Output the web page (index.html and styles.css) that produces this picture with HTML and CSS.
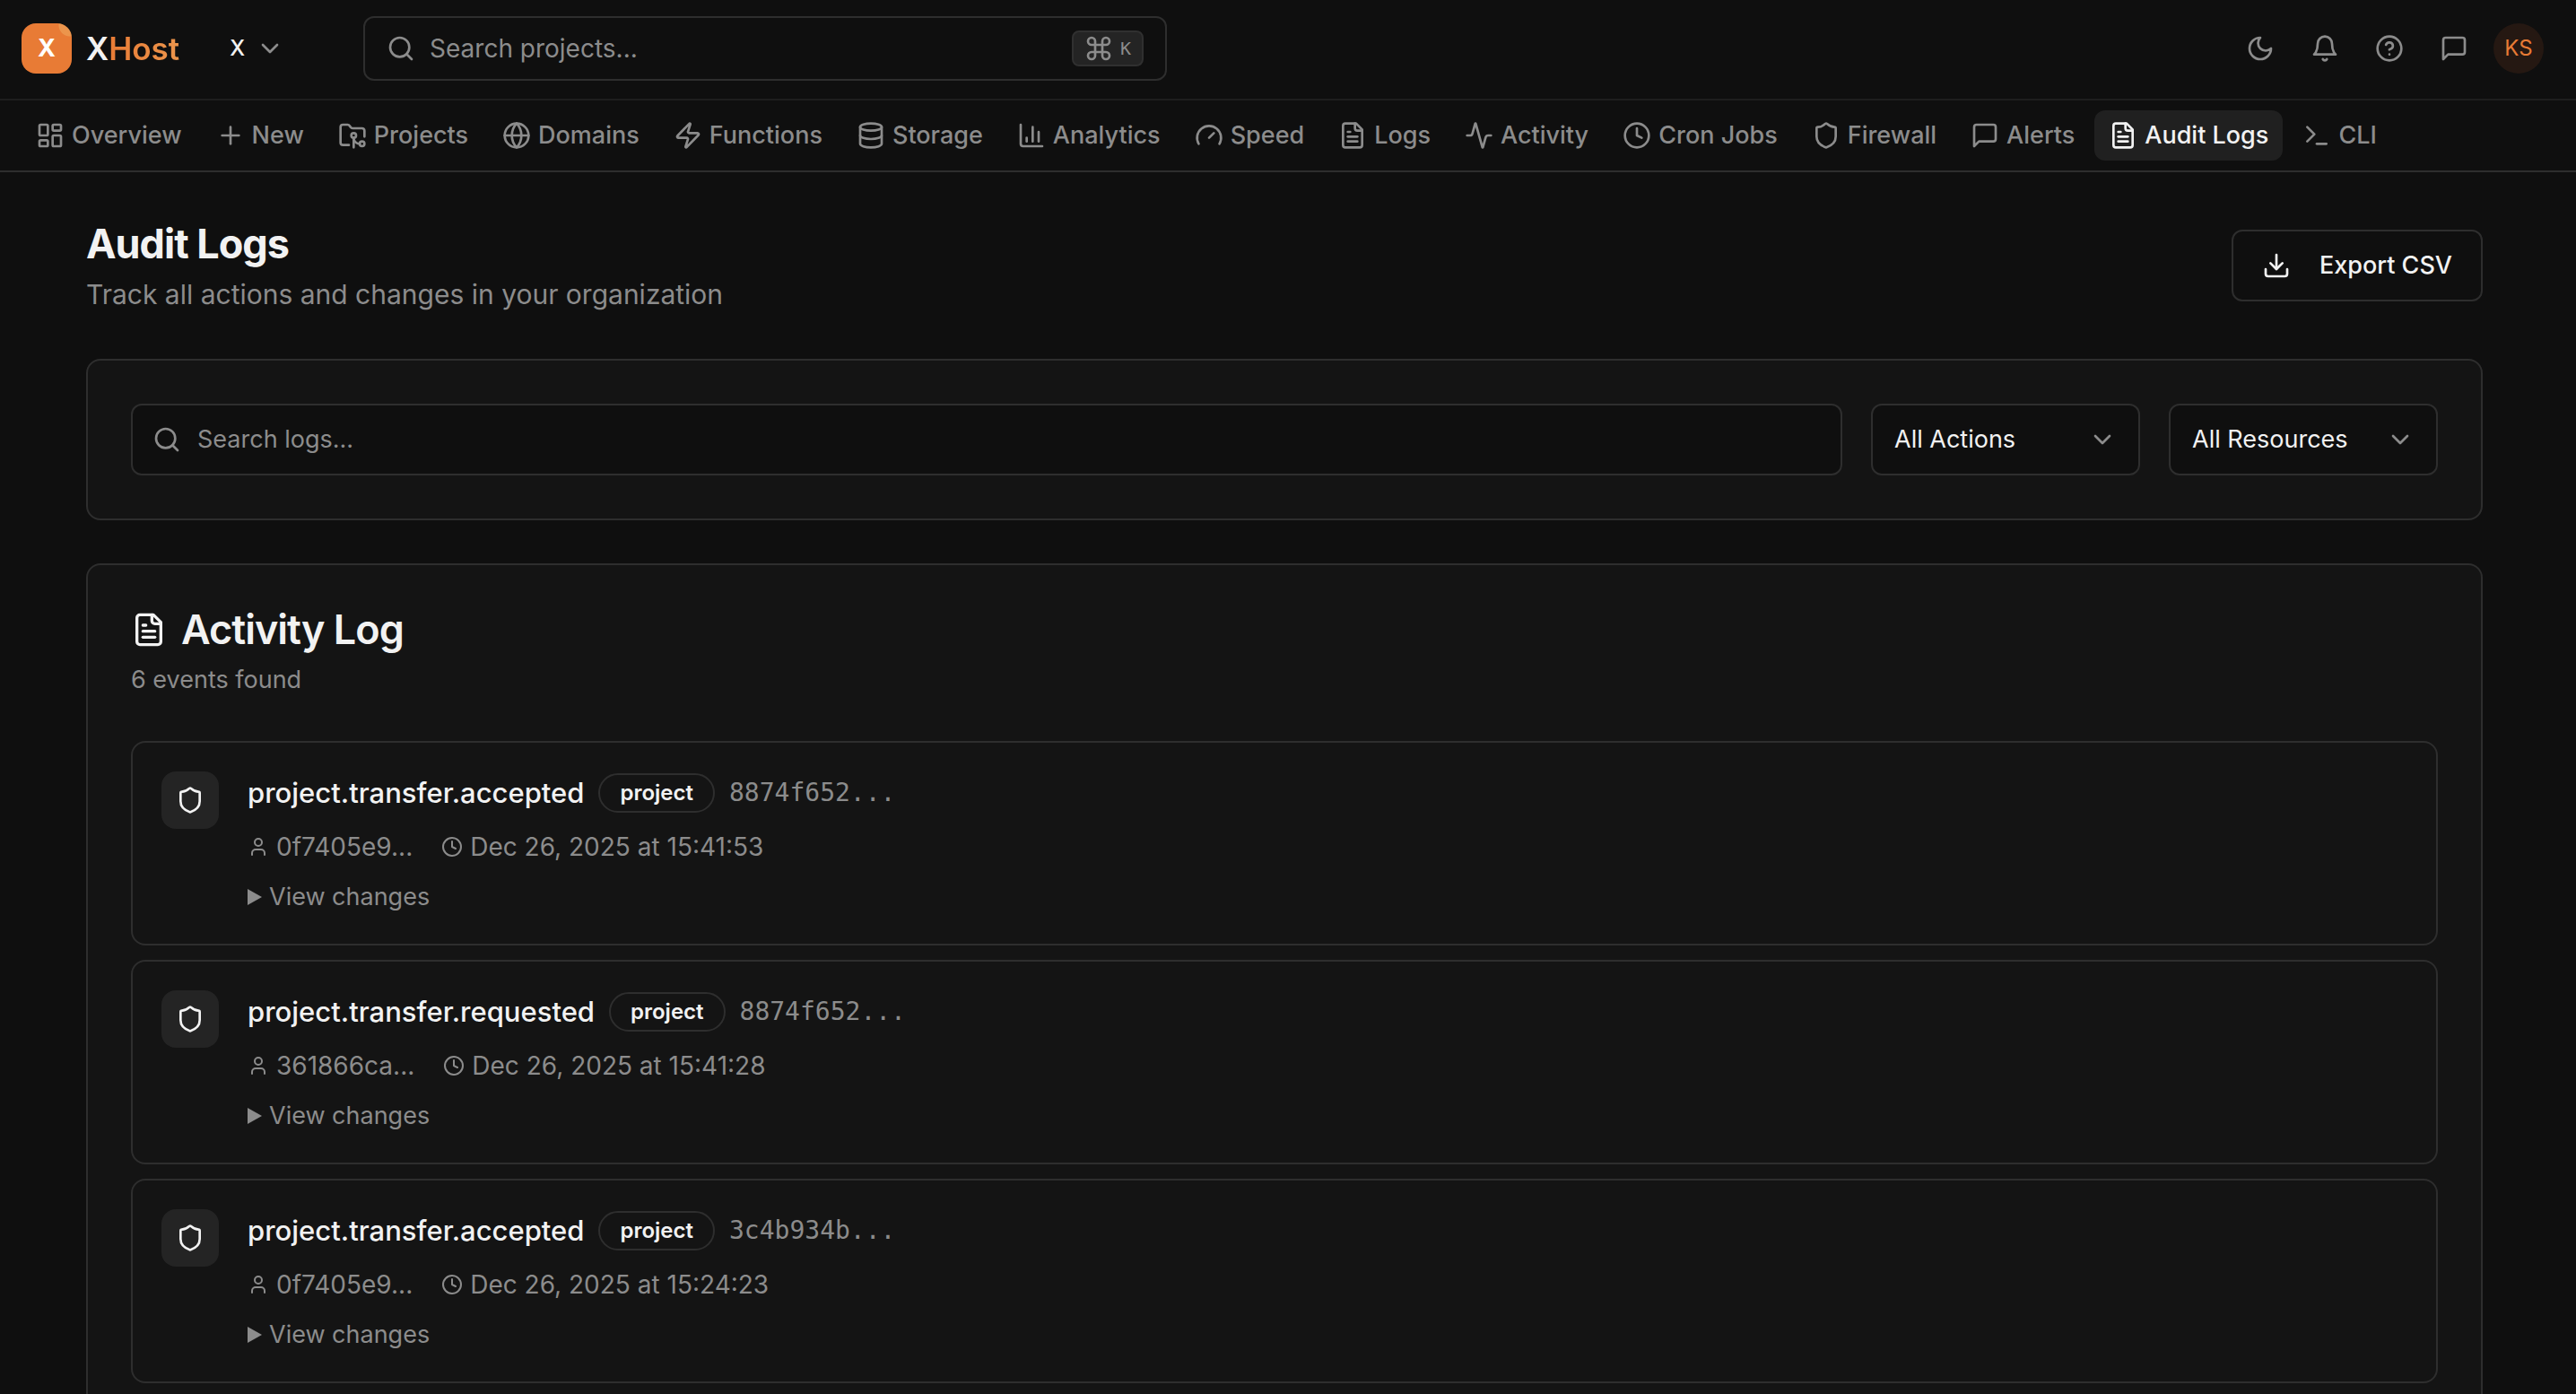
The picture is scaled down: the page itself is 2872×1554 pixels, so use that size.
FILE: index.html
```html
<!DOCTYPE html>
<html lang="en">
<head>
  <meta charset="UTF-8">
  <title>Audit Logs - XHost</title>
  <link rel="stylesheet" href="styles.css">
</head>
<body>
  <!-- icon sprite -->
  <svg class="sprite" aria-hidden="true">
    <symbol id="i-search" viewBox="0 0 24 24"><circle cx="11" cy="11" r="8"/><path d="m21 21-4.3-4.3"/></symbol>
    <symbol id="i-chevron" viewBox="0 0 24 24"><path d="m6 9 6 6 6-6"/></symbol>
    <symbol id="i-command" viewBox="0 0 24 24"><path d="M15 6v12a3 3 0 1 0 3-3H6a3 3 0 1 0 3 3V6a3 3 0 1 0-3 3h12a3 3 0 1 0-3-3"/></symbol>
    <symbol id="i-moon" viewBox="0 0 24 24"><path d="M12 3a6 6 0 0 0 9 9 9 9 0 1 1-9-9Z"/></symbol>
    <symbol id="i-bell" viewBox="0 0 24 24"><path d="M6 8a6 6 0 0 1 12 0c0 7 3 9 3 9H3s3-2 3-9"/><path d="M10.3 21a1.94 1.94 0 0 0 3.4 0"/></symbol>
    <symbol id="i-help" viewBox="0 0 24 24"><circle cx="12" cy="12" r="10"/><path d="M9.09 9a3 3 0 0 1 5.83 1c0 2-3 3-3 3"/><path d="M12 17h.01"/></symbol>
    <symbol id="i-message" viewBox="0 0 24 24"><path d="M21 15a2 2 0 0 1-2 2H7l-4 4V5a2 2 0 0 1 2-2h14a2 2 0 0 1 2 2z"/></symbol>
    <symbol id="i-dashboard" viewBox="0 0 24 24"><rect width="7" height="9" x="3" y="3" rx="1"/><rect width="7" height="5" x="14" y="3" rx="1"/><rect width="7" height="9" x="14" y="12" rx="1"/><rect width="7" height="5" x="3" y="16" rx="1"/></symbol>
    <symbol id="i-plus" viewBox="0 0 24 24"><path d="M5 12h14"/><path d="M12 5v14"/></symbol>
    <symbol id="i-folder-git" viewBox="0 0 24 24"><path d="M9 20H4a2 2 0 0 1-2-2V5a2 2 0 0 1 2-2h3.9a2 2 0 0 1 1.69.9l.81 1.2a2 2 0 0 0 1.67.9H20a2 2 0 0 1 2 2v5"/><circle cx="13" cy="12" r="2"/><path d="M18 19c-2.8 0-5-2.2-5-5v8"/><circle cx="20" cy="19" r="2"/></symbol>
    <symbol id="i-globe" viewBox="0 0 24 24"><circle cx="12" cy="12" r="10"/><path d="M12 2a14.5 14.5 0 0 0 0 20 14.5 14.5 0 0 0 0-20"/><path d="M2 12h20"/></symbol>
    <symbol id="i-zap" viewBox="0 0 24 24"><path d="M4 14a1 1 0 0 1-.78-1.63l9.9-10.2a.5.5 0 0 1 .86.46l-1.92 6.02A1 1 0 0 0 13 10h7a1 1 0 0 1 .78 1.63l-9.9 10.2a.5.5 0 0 1-.86-.46l1.92-6.02A1 1 0 0 0 11 14z"/></symbol>
    <symbol id="i-database" viewBox="0 0 24 24"><ellipse cx="12" cy="5" rx="9" ry="3"/><path d="M3 5v14a9 3 0 0 0 18 0V5"/><path d="M3 12a9 3 0 0 0 18 0"/></symbol>
    <symbol id="i-chart" viewBox="0 0 24 24"><path d="M3 3v16a2 2 0 0 0 2 2h16"/><path d="M18 17V9"/><path d="M13 17V5"/><path d="M8 17v-3"/></symbol>
    <symbol id="i-gauge" viewBox="0 0 24 24"><path d="m12 14 4-4"/><path d="M3.34 19a10 10 0 1 1 17.32 0"/></symbol>
    <symbol id="i-file" viewBox="0 0 24 24"><path d="M15 2H6a2 2 0 0 0-2 2v16a2 2 0 0 0 2 2h12a2 2 0 0 0 2-2V7Z"/><path d="M14 2v4a2 2 0 0 0 2 2h4"/><path d="M10 9H8"/><path d="M16 13H8"/><path d="M16 17H8"/></symbol>
    <symbol id="i-activity" viewBox="0 0 24 24"><path d="M22 12h-2.48a2 2 0 0 0-1.93 1.46l-2.35 8.36a.25.25 0 0 1-.48 0L9.24 2.18a.25.25 0 0 0-.48 0l-2.35 8.36A2 2 0 0 1 4.49 12H2"/></symbol>
    <symbol id="i-clock" viewBox="0 0 24 24"><circle cx="12" cy="12" r="10"/><path d="M12 6v6l4 2"/></symbol>
    <symbol id="i-shield" viewBox="0 0 24 24"><path d="M20 13c0 5-3.5 7.5-7.66 8.95a1 1 0 0 1-.67-.01C7.5 20.5 4 18 4 13V6a1 1 0 0 1 1-1c2 0 4.5-1.2 6.24-2.72a1.17 1.17 0 0 1 1.52 0C14.51 3.81 17 5 19 5a1 1 0 0 1 1 1z"/></symbol>
    <symbol id="i-terminal" viewBox="0 0 24 24"><path d="m4 17 6-6-6-6"/><path d="M12 19h8"/></symbol>
    <symbol id="i-download" viewBox="0 0 24 24"><path d="M21 15v4a2 2 0 0 1-2 2H5a2 2 0 0 1-2-2v-4"/><path d="m7 10 5 5 5-5"/><path d="M12 15V3"/></symbol>
    <symbol id="i-user" viewBox="0 0 24 24"><path d="M19 21v-2a4 4 0 0 0-4-4H9a4 4 0 0 0-4 4v2"/><circle cx="12" cy="7" r="4"/></symbol>
  </svg>

  <header class="topbar">
    <a class="brand" href="#">
      <span class="brand-mark">X</span>
      <span class="brand-name">X<span class="brand-accent">Host</span></span>
    </a>
    <button class="org-switch" type="button">X <svg class="icon"><use href="#i-chevron"/></svg></button>
    <div class="global-search">
      <svg class="icon"><use href="#i-search"/></svg>
      <input type="search" placeholder="Search projects..." aria-label="Search projects">
      <kbd><svg class="icon"><use href="#i-command"/></svg>K</kbd>
    </div>
    <div class="actions">
      <button type="button" aria-label="Toggle theme"><svg class="icon"><use href="#i-moon"/></svg></button>
      <button type="button" aria-label="Notifications"><svg class="icon"><use href="#i-bell"/></svg></button>
      <button type="button" aria-label="Help"><svg class="icon"><use href="#i-help"/></svg></button>
      <button type="button" aria-label="Feedback"><svg class="icon"><use href="#i-message"/></svg></button>
      <button type="button" aria-label="Account"><span class="avatar">KS</span></button>
    </div>
  </header>

  <nav class="tabs">
    <a href="#"><svg class="icon"><use href="#i-dashboard"/></svg>Overview</a>
    <a href="#"><svg class="icon"><use href="#i-plus"/></svg>New</a>
    <a href="#"><svg class="icon"><use href="#i-folder-git"/></svg>Projects</a>
    <a href="#"><svg class="icon"><use href="#i-globe"/></svg>Domains</a>
    <a href="#"><svg class="icon"><use href="#i-zap"/></svg>Functions</a>
    <a href="#"><svg class="icon"><use href="#i-database"/></svg>Storage</a>
    <a href="#"><svg class="icon"><use href="#i-chart"/></svg>Analytics</a>
    <a href="#"><svg class="icon"><use href="#i-gauge"/></svg>Speed</a>
    <a href="#"><svg class="icon"><use href="#i-file"/></svg>Logs</a>
    <a href="#"><svg class="icon"><use href="#i-activity"/></svg>Activity</a>
    <a href="#"><svg class="icon"><use href="#i-clock"/></svg>Cron Jobs</a>
    <a href="#"><svg class="icon"><use href="#i-shield"/></svg>Firewall</a>
    <a href="#"><svg class="icon"><use href="#i-message"/></svg>Alerts</a>
    <a href="#" class="active" aria-current="page"><svg class="icon"><use href="#i-file"/></svg>Audit Logs</a>
    <a href="#"><svg class="icon"><use href="#i-terminal"/></svg>CLI</a>
  </nav>

  <main>
    <div class="page-head">
      <div>
        <h1>Audit Logs</h1>
        <p>Track all actions and changes in your organization</p>
      </div>
      <button class="export" type="button"><svg class="icon"><use href="#i-download"/></svg>Export CSV</button>
    </div>

    <section class="card filters">
      <div class="log-search">
        <svg class="icon"><use href="#i-search"/></svg>
        <input type="search" placeholder="Search logs..." aria-label="Search logs">
      </div>
      <div class="select">
        <select aria-label="Action"><option>All Actions</option></select>
        <svg class="icon"><use href="#i-chevron"/></svg>
      </div>
      <div class="select">
        <select aria-label="Resource"><option>All Resources</option></select>
        <svg class="icon"><use href="#i-chevron"/></svg>
      </div>
    </section>

    <section class="card log">
      <h2><svg class="icon"><use href="#i-file"/></svg>Activity Log</h2>
      <p class="count">6 events found</p>

      <ul class="events">
        <li class="event">
          <span class="event-icon"><svg class="icon"><use href="#i-shield"/></svg></span>
          <div>
            <div class="event-title"><h3>project.transfer.accepted</h3><span class="badge">project</span><code>8874f652...</code></div>
            <div class="meta">
              <span><svg class="icon"><use href="#i-user"/></svg>0f7405e9...</span>
              <span><svg class="icon"><use href="#i-clock"/></svg>Dec 26, 2025 at 15:41:53</span>
            </div>
            <details><summary>View changes</summary></details>
          </div>
        </li>
        <li class="event">
          <span class="event-icon"><svg class="icon"><use href="#i-shield"/></svg></span>
          <div>
            <div class="event-title"><h3>project.transfer.requested</h3><span class="badge">project</span><code>8874f652...</code></div>
            <div class="meta">
              <span><svg class="icon"><use href="#i-user"/></svg>361866ca...</span>
              <span><svg class="icon"><use href="#i-clock"/></svg>Dec 26, 2025 at 15:41:28</span>
            </div>
            <details><summary>View changes</summary></details>
          </div>
        </li>
        <li class="event">
          <span class="event-icon"><svg class="icon"><use href="#i-shield"/></svg></span>
          <div>
            <div class="event-title"><h3>project.transfer.accepted</h3><span class="badge">project</span><code>3c4b934b...</code></div>
            <div class="meta">
              <span><svg class="icon"><use href="#i-user"/></svg>0f7405e9...</span>
              <span><svg class="icon"><use href="#i-clock"/></svg>Dec 26, 2025 at 15:24:23</span>
            </div>
            <details><summary>View changes</summary></details>
          </div>
        </li>
      </ul>
    </section>
  </main>
</body>
</html>
```

FILE: styles.css
```css
:root {
  --bg: #0f0f0f;
  --card: #141414;
  --border: #2e2e2e;
  --text: #f2f2f2;
  --muted: #8c8c8c;
  --orange: #e87b35;
}

* {
  box-sizing: border-box;
}

body {
  margin: 0;
  background: var(--bg);
  color: var(--text);
  font-family: Inter, sans-serif;
  font-size: 27px;
  line-height: 40px;
}

h1, h2, h3, p, ul {
  margin: 0;
  padding: 0;
}

a {
  color: inherit;
  text-decoration: none;
}

button, input, select {
  font: inherit;
  color: inherit;
  background: none;
  border: 0;
  padding: 0;
}

input {
  appearance: none;
  outline: none;
}

input::placeholder {
  color: var(--muted);
  opacity: 1;
}

.sprite {
  display: none;
}

.icon {
  width: 32px;
  height: 32px;
  flex-shrink: 0;
  fill: none;
  stroke: currentColor;
  stroke-width: 2;
  stroke-linecap: round;
  stroke-linejoin: round;
}

/* top bar */
.topbar {
  display: flex;
  align-items: center;
  padding: 18px 28px 20px 24px;
  border-bottom: 2px solid #1e1e1e;
}

.brand {
  display: flex;
  align-items: center;
  gap: 16px;
}

.brand-mark {
  width: 56px;
  height: 56px;
  border-radius: 16px;
  background: radial-gradient(circle at 54px 2px, #ec954c 12px, var(--orange) 13px);
  color: #fff;
  font-weight: 700;
  line-height: 56px;
  text-align: center;
}

.brand-name {
  font-size: 35px;
  font-weight: 600;
}

.brand-accent {
  background: linear-gradient(90deg, #e87b35, #ec954c);
  background-clip: text;
  color: transparent;
}

.org-switch {
  display: flex;
  align-items: center;
  gap: 12px;
  margin-left: 56px;
  font-size: 24px;
  font-weight: 500;
}

.org-switch .icon {
  color: var(--muted);
}

.global-search {
  display: flex;
  align-items: center;
  gap: 16px;
  width: 896px;
  height: 72px;
  margin-left: 88px;
  padding: 0 24px;
  border: 2px solid var(--border);
  border-radius: 12px;
  color: var(--muted);
  font-size: 28px;
}

.global-search input {
  flex: 1;
  min-width: 0;
}

kbd {
  display: flex;
  align-items: center;
  gap: 8px;
  height: 40px;
  padding: 0 12px;
  border: 2px solid #303030;
  border-radius: 8px;
  background: #242424;
  font-family: "DejaVu Sans Mono", monospace;
  font-size: 20px;
}

.actions {
  display: flex;
  margin-left: auto;
  color: var(--muted);
}

.actions button {
  display: flex;
  align-items: center;
  justify-content: center;
  width: 72px;
  height: 72px;
}

.avatar {
  width: 56px;
  height: 56px;
  border-radius: 50%;
  background: #251812;
  color: var(--orange);
  font-size: 24px;
  line-height: 56px;
}

/* section tabs */
.tabs {
  display: flex;
  align-items: center;
  gap: 6px;
  height: 80px;
  padding: 0 24px;
  border-bottom: 2px solid var(--border);
  color: var(--muted);
}

.tabs a {
  display: flex;
  align-items: center;
  gap: 8px;
  height: 56px;
  padding: 0 16px;
  border-radius: 12px;
  font-weight: 500;
  white-space: nowrap;
}

.tabs .active {
  background: #202020;
  color: var(--text);
}

/* page */
main {
  padding: 48px 104px 48px 96px;
}

.page-head {
  display: flex;
  align-items: center;
  justify-content: space-between;
  margin-bottom: 48px;
}

h1 {
  font-size: 45px;
  font-weight: 700;
  line-height: 64px;
  letter-spacing: -1px;
}

.page-head p {
  color: var(--muted);
  font-size: 30px;
  line-height: 48px;
}

.export {
  display: flex;
  align-items: center;
  gap: 32px;
  height: 80px;
  padding: 0 32px;
  border: 2px solid var(--border);
  border-radius: 12px;
  font-weight: 500;
}

.card {
  margin-bottom: 48px;
  padding: 48px;
  border: 2px solid var(--border);
  border-radius: 16px;
  background: var(--card);
}

.filters {
  display: flex;
  gap: 32px;
}

.log-search {
  display: flex;
  flex: 1;
  align-items: center;
  gap: 18px;
  height: 80px;
  padding: 0 22px;
  border: 2px solid var(--border);
  border-radius: 12px;
  background: var(--bg);
  color: var(--muted);
}

.log-search input {
  flex: 1;
}

.select {
  display: grid;
  align-items: center;
  width: 300px;
}

.select select,
.select .icon {
  grid-area: 1 / 1;
}

.select select {
  appearance: none;
  height: 80px;
  padding: 0 24px;
  border: 2px solid var(--border);
  border-radius: 12px;
  background: var(--bg);
}

.select .icon {
  justify-self: end;
  margin-right: 26px;
  color: var(--muted);
  pointer-events: none;
}

/* activity log */
h2 {
  display: flex;
  align-items: center;
  gap: 16px;
  font-size: 45px;
  font-weight: 600;
  line-height: 48px;
  letter-spacing: -1px;
}

h2 .icon {
  width: 40px;
  height: 40px;
}

.count {
  margin: 12px 0 48px;
  color: var(--muted);
}

.events {
  display: grid;
  gap: 16px;
  list-style: none;
}

.event {
  display: flex;
  gap: 32px;
  padding: 32px;
  border: 2px solid var(--border);
  border-radius: 16px;
}

.event-icon {
  display: flex;
  align-items: center;
  justify-content: center;
  width: 64px;
  height: 64px;
  border-radius: 16px;
  background: #242424;
}

.event-title {
  display: flex;
  align-items: center;
  gap: 16px;
}

h3 {
  font-size: 31px;
  font-weight: 500;
  line-height: 48px;
}

.badge {
  padding: 4px 22px;
  border: 2px solid var(--border);
  border-radius: 22px;
  font-size: 24px;
  font-weight: 600;
  line-height: 32px;
}

code {
  color: var(--muted);
  font-family: "DejaVu Sans Mono", monospace;
  font-size: 28px;
}

.meta {
  display: flex;
  gap: 32px;
  margin: 16px 0;
  color: var(--muted);
  font-size: 28px;
}

.meta span {
  display: flex;
  align-items: center;
  gap: 8px;
}

.meta .icon {
  width: 24px;
  height: 24px;
}

summary {
  display: flex;
  align-items: center;
  gap: 8px;
  color: var(--muted);
  cursor: pointer;
}

/* disclosure triangle */
summary::before {
  content: "";
  width: 16px;
  height: 18px;
  background: currentColor;
  clip-path: polygon(0 0, 100% 50%, 0 100%);
}

details[open] summary::before {
  transform: rotate(90deg);
}
```
